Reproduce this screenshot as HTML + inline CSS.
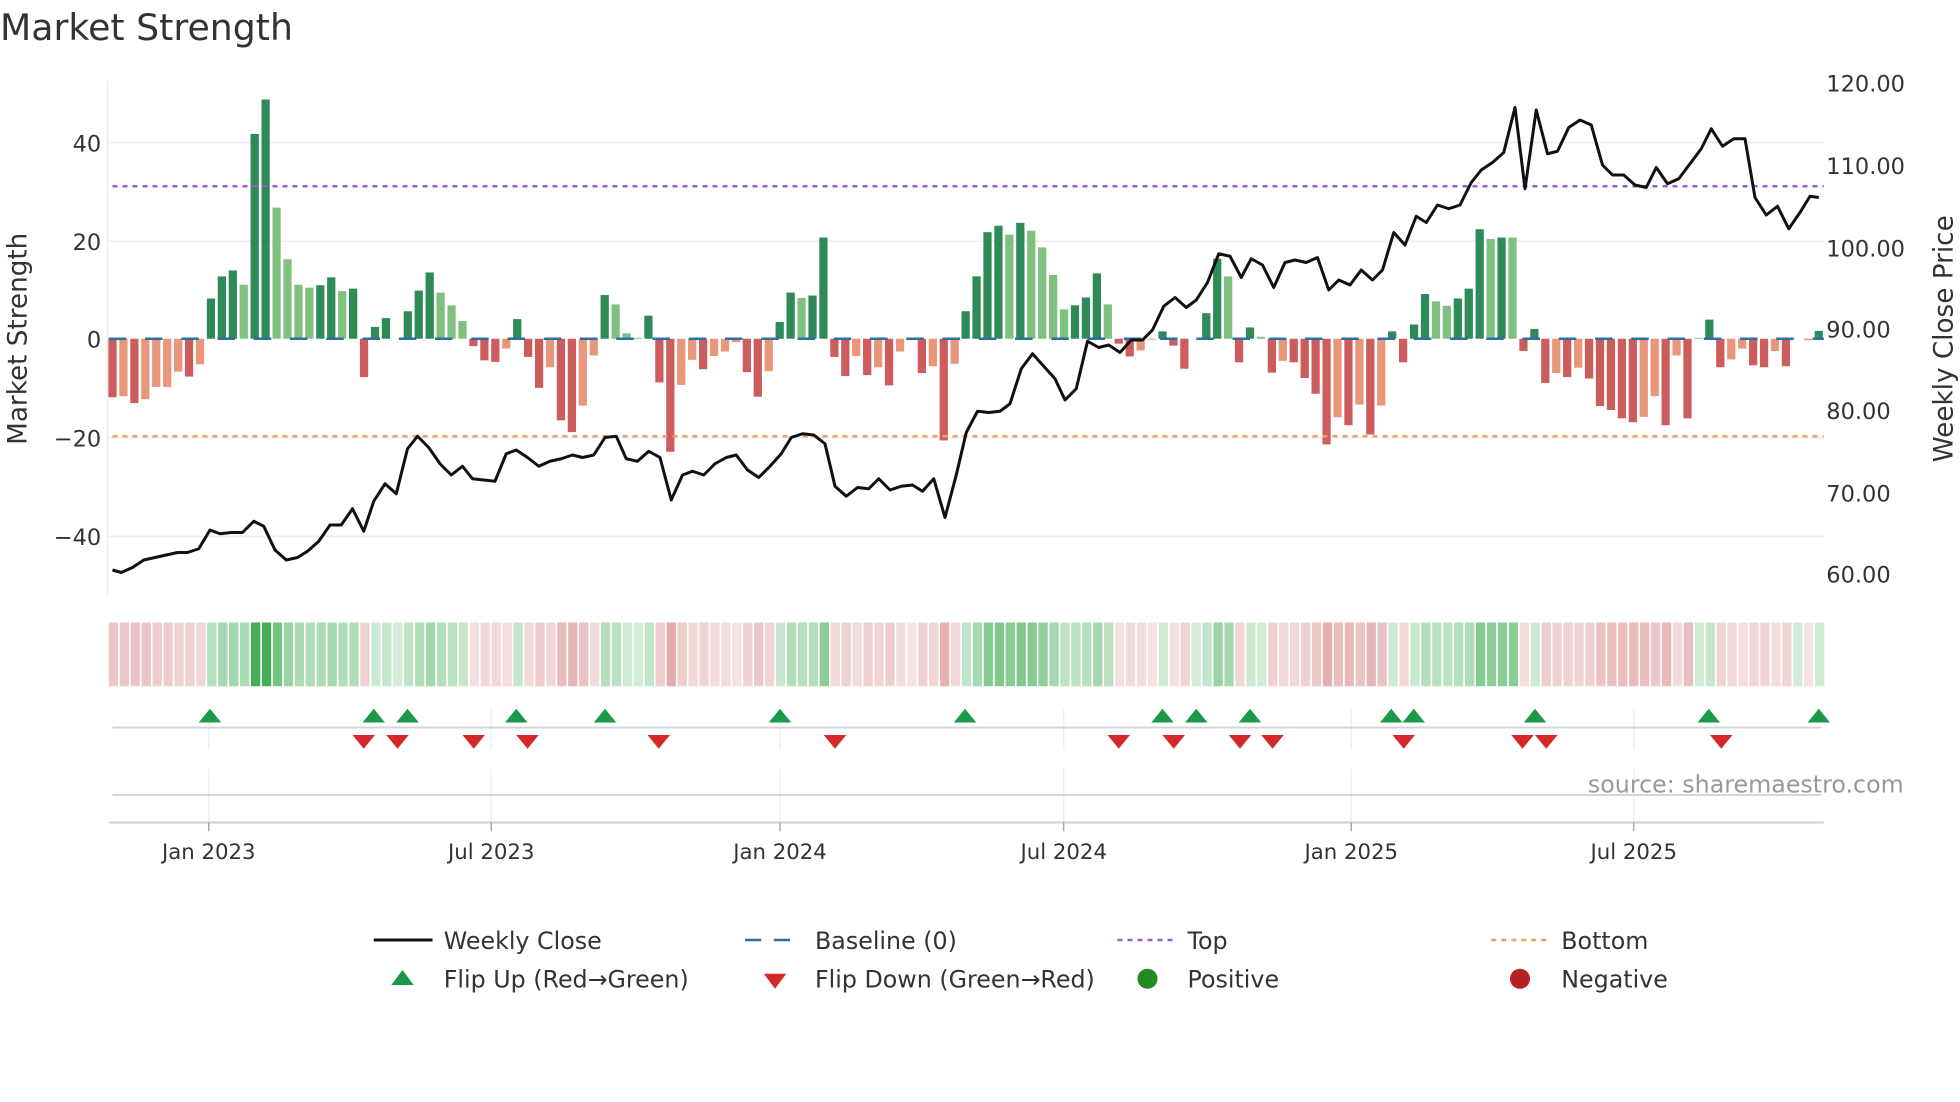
<!DOCTYPE html>
<html><head><meta charset="utf-8">
<style>
html,body{margin:0;padding:0;background:#fff;}
svg{display:block;font-family:"DejaVu Sans","Liberation Sans",sans-serif;}
</style></head>
<body>
<svg id="c" width="1960" height="1102" viewBox="0 0 1568 881.6" xmlns="http://www.w3.org/2000/svg">
<rect width="1568" height="882" fill="#fff"/>
<text x="0" y="32" font-size="29" fill="#333">Market Strength</text>
<!-- grid -->
<g stroke="#eceef4" stroke-width="1.3">
<line x1="87" y1="114" x2="1459" y2="114"/>
<line x1="87" y1="193" x2="1459" y2="193"/>
<line x1="87" y1="350" x2="1459" y2="350"/>
<line x1="87" y1="429" x2="1459" y2="429"/>
<line x1="86" y1="65" x2="86" y2="478"/>
</g>
<g font-size="18" fill="#333" text-anchor="end">
<text x="81" y="121">40</text>
<text x="81" y="200">20</text>
<text x="81" y="278">0</text>
<text x="81" y="357">−20</text>
<text x="81" y="436">−40</text>
</g>
<g font-size="18" fill="#333">
<text x="1461" y="73">120.00</text>
<text x="1461" y="139">110.00</text>
<text x="1461" y="205">100.00</text>
<text x="1461" y="270">90.00</text>
<text x="1461" y="335">80.00</text>
<text x="1461" y="401">70.00</text>
<text x="1461" y="466">60.00</text>
</g>
<text transform="translate(21,271) rotate(-90)" font-size="21" fill="#333" text-anchor="middle">Market Strength</text>
<text transform="translate(1562,271) rotate(-90)" font-size="21" fill="#333" text-anchor="middle">Weekly Close Price</text>
<g id="bars"></g>
<line x1="87" y1="271" x2="1459" y2="271" stroke="#2f6f9f" stroke-width="2" stroke-dasharray="14,15"/>
<line x1="90" y1="149" x2="1459" y2="149" stroke="#9a5bd3" stroke-width="2" stroke-dasharray="4,4"/>
<line x1="90" y1="349" x2="1459" y2="349" stroke="#f0a060" stroke-width="2" stroke-dasharray="4,4"/>
<polyline fill="none" stroke="#111" stroke-width="2.4" stroke-linejoin="round" points="90,456 97,458 106,454 115,448 124,446 133,444 142,442 150,442 159,439 168,424 176,427 185,426 194,426 203,417 211,421 220,440 229,448 238,446 246,441 255,433 264,420 273,420 282,407 291,425 299,401 308,387 317,395 326,359 334,349 343,358 352,371 361,380 370,373 378,383 387,384 396,385 405,363 413,360 422,366 431,373 440,369 449,367 458,364 466,366 475,364 484,350 493,349 501,367 510,369 519,361 528,366 537,400 546,380 554,377 563,380 572,371 581,366 589,364 598,376 607,382 616,373 625,363 633,350 642,347 651,348 660,355 668,389 677,397 686,390 695,391 703,383 712,392 721,389 730,388 738,393 747,383 756,414 765,380 773,346 782,329 791,330 800,329 808,323 817,295 826,283 835,293 844,303 852,320 861,311 870,273 879,278 887,276 896,282 905,272 914,272 922,264 931,245 940,238 949,246 957,240 966,226 975,203 984,205 993,222 1001,207 1010,212 1019,230 1028,210 1036,208 1045,210 1054,206 1063,232 1071,224 1080,228 1089,216 1098,224 1106,216 1115,186 1124,196 1133,173 1141,178 1150,164 1159,167 1168,164 1177,146 1185,136 1194,130 1203,122 1212,86 1220,151 1229,88 1238,123 1246,121 1255,102 1264,96 1273,100 1282,132 1290,140 1299,140 1308,148 1317,150 1325,134 1334,147 1343,143 1352,131 1361,119 1369,103 1378,117 1387,111 1396,111 1404,158 1413,172 1422,165 1431,183 1440,170 1448,157 1455,158"/>
<g id="heat"></g>
<!-- lower panels -->
<g stroke="#eceef4" stroke-width="1">
<line x1="167" y1="567" x2="167" y2="600"/><line x1="393" y1="567" x2="393" y2="600"/><line x1="624" y1="567" x2="624" y2="600"/><line x1="851" y1="567" x2="851" y2="600"/><line x1="1081" y1="567" x2="1081" y2="600"/><line x1="1307" y1="567" x2="1307" y2="600"/>
<line x1="167" y1="615" x2="167" y2="658"/><line x1="393" y1="615" x2="393" y2="658"/><line x1="624" y1="615" x2="624" y2="658"/><line x1="851" y1="615" x2="851" y2="658"/><line x1="1081" y1="615" x2="1081" y2="658"/><line x1="1307" y1="615" x2="1307" y2="658"/>
</g>
<line x1="90" y1="582" x2="1457" y2="582" stroke="#d4d6da" stroke-width="1.6"/>
<line x1="90" y1="636" x2="1457" y2="636" stroke="#d4d6da" stroke-width="1.6"/>
<line x1="87" y1="658" x2="1459" y2="658" stroke="#cfd1d5" stroke-width="1.6"/>
<g stroke="#999" stroke-width="1">
<line x1="167" y1="658" x2="167" y2="665"/><line x1="393" y1="658" x2="393" y2="665"/><line x1="624" y1="658" x2="624" y2="665"/><line x1="851" y1="658" x2="851" y2="665"/><line x1="1081" y1="658" x2="1081" y2="665"/><line x1="1307" y1="658" x2="1307" y2="665"/>
</g>
<g id="marks"></g>
<text x="1523" y="634" font-size="19" fill="#999" text-anchor="end">source: sharemaestro.com</text>
<g font-size="17" fill="#333" text-anchor="middle">
<text x="167" y="687">Jan 2023</text><text x="393" y="687">Jul 2023</text><text x="624" y="687">Jan 2024</text><text x="851" y="687">Jul 2024</text><text x="1081" y="687">Jan 2025</text><text x="1307" y="687">Jul 2025</text>
</g>
<!-- legend -->
<line x1="299" y1="752" x2="346" y2="752" stroke="#111" stroke-width="2.4"/>
<line x1="596" y1="752" x2="640" y2="752" stroke="#2f6f9f" stroke-width="2" stroke-dasharray="13,10"/>
<line x1="894" y1="752" x2="938" y2="752" stroke="#9a5bd3" stroke-width="2" stroke-dasharray="4,4"/>
<line x1="1193" y1="752" x2="1237" y2="752" stroke="#f0a060" stroke-width="2" stroke-dasharray="4,4"/>
<polygon points="313,788 331,788 322,776" fill="#1a9a48"/>
<polygon points="611,779 629,779 620,791" fill="#d62828"/>
<circle cx="918" cy="783" r="8" fill="#228b22"/>
<circle cx="1216" cy="783" r="8" fill="#b22222"/>
<g font-size="19" fill="#333">
<text x="355" y="759">Weekly Close</text><text x="652" y="759">Baseline (0)</text><text x="950" y="759">Top</text><text x="1249" y="759">Bottom</text>
<text x="355" y="790">Flip Up (Red→Green)</text><text x="652" y="790">Flip Down (Green→Red)</text><text x="950" y="790">Positive</text><text x="1249" y="790">Negative</text>
</g>
</svg>
<script>
var D="-11.9d,-11.7l,-13.1d,-12.3l,-9.8l,-9.8l,-6.7l,-7.7d,-5.2l,8.2d,12.7d,13.9d,11l,41.7d,48.7d,26.7l,16.2l,11l,10.4l,10.9d,12.5d,9.7l,10.2d,-7.8d,2.4d,4.2d,0l,5.6d,9.8d,13.5d,9.4l,6.8l,3.6l,-1.5d,-4.4d,-4.7d,-2l,4d,-3.7d,-10d,-5.8l,-16.6d,-19d,-13.6l,-3.4l,8.9d,7l,1.1l,0.2l,4.7d,-8.9d,-23d,-9.4l,-4.3l,-6.2d,-3.5l,-2.6l,-0.7l,-6.8d,-11.8d,-6.6l,3.4d,9.4d,8.3l,8.8d,20.6d,-3.7d,-7.6d,-3.5l,-7.4d,-5.8l,-9.5d,-2.6l,-0.3l,-7d,-5.6l,-20.7d,-5.1l,5.6d,12.7d,21.7d,23d,21.2l,23.6d,22l,18.6l,13l,6l,6.8d,8.4d,13.3d,7l,-1d,-3.6d,-2.4l,-0.2l,1.5d,-1.4d,-6.1d,0l,5.2d,16.3d,12.7l,-4.8d,2.3d,0.4l,-6.9d,-4.5l,-4.8d,-8d,-11.2d,-21.5d,-16l,-17.6d,-13.4l,-19.5d,-13.6l,1.5d,-4.8d,2.9d,9.1d,7.6l,6.7l,8.2d,10.2d,22.3d,20.3l,20.6d,20.6l,-2.5d,2d,-9d,-7l,-7.8d,-5.9l,-8.1d,-13.7d,-14.5d,-16.2d,-17d,-15.9l,-11.7l,-17.6d,-3.4l,-16.2d,0.2l,3.9d,-5.8d,-4.2l,-2l,-5.4d,-5.8d,-2.5l,-5.6d,0l,-0.3l,1.6d".split(",");
var NS="http://www.w3.org/2000/svg",b=document.getElementById("bars"),h=document.getElementById("heat"),m=document.getElementById("marks");
function el(p,t,a){var e=document.createElementNS(NS,t);for(var k in a)e.setAttribute(k,a[k]);p.appendChild(e);return e;}
var sp=8.75;
D.forEach(function(s,i){var v=parseFloat(s),dk=s.slice(-1)=="d",x=90+sp*i;
 var col=v>=0?(dk?"#2e8b57":"#80c080"):(dk?"#cd5c5c":"#e9967a");
 var hh=Math.abs(v)*3.93; if(hh>0.3) el(b,"rect",{x:x-3.3,y:v>=0?271-hh:271,width:6.6,height:hh,fill:col});
 var a=Math.min(0.95,0.22+0.55*Math.abs(v)/30);
 var c=v>=0?"rgba(60,170,80,"+a+")":"rgba(200,95,95,"+(a*0.8)+")";
 el(h,"rect",{x:87+sp*i,y:498,width:sp-1.3,height:51,fill:c});
});
[168,299,326,413,484,624,772,930,957,1000,1113,1131,1228,1367,1455].forEach(function(x){el(m,"polygon",{points:(x-9)+",578 "+(x+9)+",578 "+x+",567",fill:"#1a9a48"});});
[291,318,379,422,527,668,895,939,992,1018,1123,1218,1237,1377].forEach(function(x){el(m,"polygon",{points:(x-9)+",588 "+(x+9)+",588 "+x+",599",fill:"#d62828"});});
</script>
</body></html>
